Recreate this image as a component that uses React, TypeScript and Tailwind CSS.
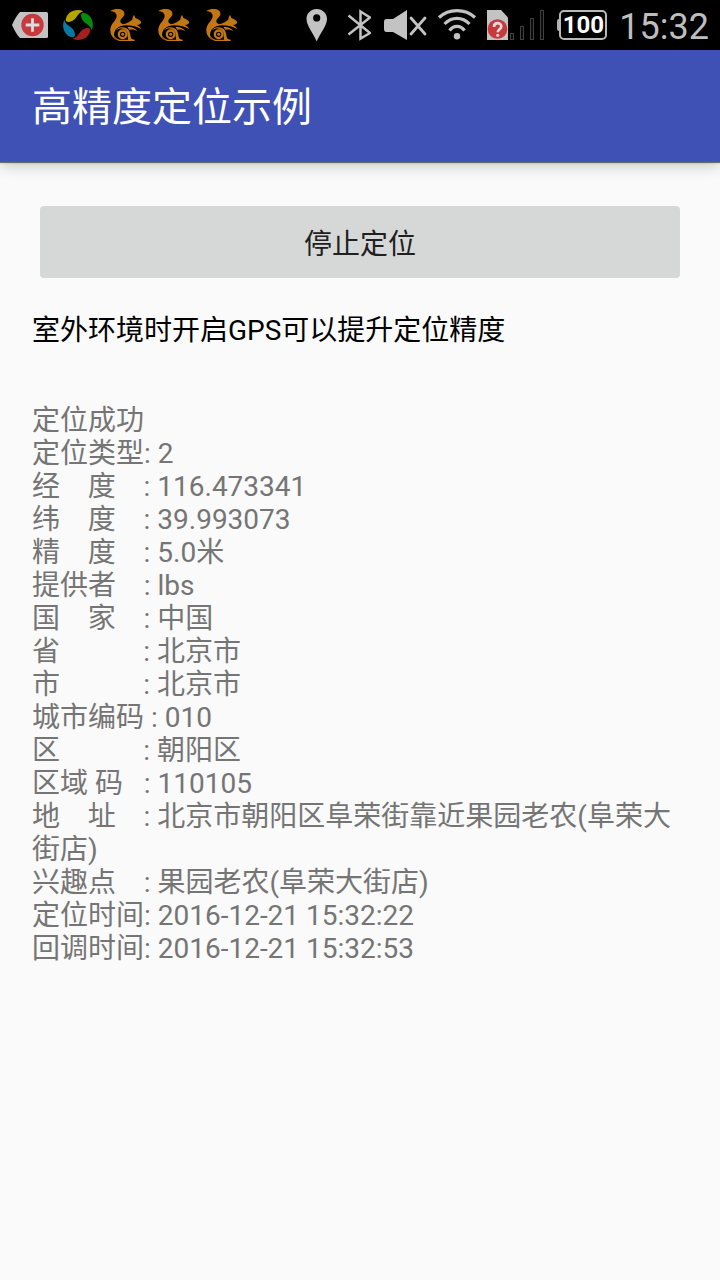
const report = [
  "定位成功",
  "定位类型: 2",
  "经    度    : 116.473341",
  "纬    度    : 39.993073",
  "精    度    : 5.0米",
  "提供者    : lbs",
  "国    家    : 中国",
  "省            : 北京市",
  "市            : 北京市",
  "城市编码 : 010",
  "区            : 朝阳区",
  "区域 码   : 110105",
  "地    址    : 北京市朝阳区阜荣街靠近果园老农(阜荣大街店)",
  "兴趣点    : 果园老农(阜荣大街店)",
  "定位时间: 2016-12-21 15:32:22",
  "回调时间: 2016-12-21 15:32:53",
];

function TagIcon() {
  return (
    <svg className="h-[50px] w-12 shrink-0" viewBox="0 0 48 50" aria-hidden="true">
      <path d="M14 12H40.500Q42 12 42 13.500V36.500Q42 38 40.500 38H14Q10 34 6 25Q10 16 14 12Z" fill="#c3c3c3" />
      <circle cx="26.500" cy="25" r="11.200" fill="#c8393d" />
      <path d="M26.500 18.200V31.800M19.700 25H33.300" stroke="#dedede" strokeWidth="2.800" />
    </svg>
  );
}

const petals = [
  { angle: 0, color: "#b5a400" },
  { angle: 90, color: "#058b0d" },
  { angle: 180, color: "#a51f20" },
  { angle: 270, color: "#0878a5" },
];

function PinwheelIcon() {
  return (
    <svg className="h-[50px] w-12 shrink-0" viewBox="0 0 144 150" aria-hidden="true">
      {petals.map((petal) => (
        <path
          key={petal.angle}
          transform={`rotate(${petal.angle} 72 75)`}
          d="M88 34C68 24 38 34 35 60C36 68 48 67 58 61C70 53 70 39 88 34Z"
          fill={petal.color}
        />
      ))}
    </svg>
  );
}

function SquirrelIcon() {
  return (
    <svg className="h-[50px] w-12 shrink-0" viewBox="0 0 144 150" aria-hidden="true">
      <g fill="#c27712">
        <path d="M25 33C34 27 46 26 54 28C63 30 69 36 67 44C65 51 55 56 55 64C55 70 61 73 67 72C76 70 84 63 91 59L92 52L96 44L100 54C107 56 114 60 118 67C116 73 111 74 105 75C112 79 116 83 118 88C106 80 89 76 72 76C50 77 37 88 36 104C36 110 39 115 43 120C30 113 24 101 25 88C26 70 45 60 44 47C43 38 35 34 25 33Z" />
        <path d="M41 91C50 79 69 80 78 88C85 95 85 107 87 115Q88 118 97 119Q99 120 98 123H53C44 122 36 114 37 106C39 113 45 118 53 119H79C76 115 79 99 74 94C66 83 53 84 41 91Z" />
        <path d="M76 81C90 80 101 85 107 94C97 88 88 88 83 90Z" />
      </g>
      <circle cx="62" cy="103" r="11.500" fill="none" stroke="#c27712" strokeWidth="7" />
      <circle cx="62" cy="103" r="4.500" fill="#c27712" />
    </svg>
  );
}

function PinIcon() {
  return (
    <svg className="h-[50px] w-[30px] shrink-0" viewBox="0 0 30 50" aria-hidden="true">
      <path fillRule="evenodd" d="M11.700 9C5.800 9 1.500 13.400 1.500 19C1.500 25.500 8 33 11.700 41.500C15.400 33 22 25.500 22 19C22 13.400 17.600 9 11.700 9ZM11.700 14.300A3.600 3.600 0 1 1 11.700 21.500A3.600 3.600 0 1 1 11.700 14.300Z" fill="#c3c3c3" />
    </svg>
  );
}

function BluetoothIcon() {
  return (
    <svg className="h-[50px] w-6 shrink-0" viewBox="0 0 24 50" aria-hidden="true">
      <path d="M1.500 15.500L23 33L13.500 38.500V11.500L23 17.500L1.500 34.500" fill="none" stroke="#c3c3c3" strokeWidth="2.500" />
    </svg>
  );
}

function MutedIcon() {
  return (
    <svg className="h-[50px] w-11 shrink-0" viewBox="0 0 44 50" aria-hidden="true">
      <path d="M3.500 19H10L24 10V40L10 32H3.500Q1 32 1 29V22Q1 19 3.500 19Z" fill="#c3c3c3" />
      <path d="M28 18L42 34M42 18L28 34" stroke="#c3c3c3" strokeWidth="2.800" strokeLinecap="round" />
    </svg>
  );
}

function WifiIcon() {
  return (
    <svg className="h-[50px] w-9 shrink-0 overflow-visible" viewBox="0 0 36 50" aria-hidden="true">
      <g fill="none" stroke="#c3c3c3" strokeWidth="3.200">
        <path d="M0 17.500C10 8.300 26 8.300 36 17.500" />
        <path d="M5.500 24C12.500 16.500 23.500 16.500 30.500 24" />
        <path d="M10.500 30.500C14.500 25 21.500 25 25.500 30.500" />
      </g>
      <circle cx="18" cy="36.200" r="3.200" fill="#c3c3c3" />
    </svg>
  );
}

function SignalIcon() {
  return (
    <svg className="h-[50px] w-[58px] shrink-0" viewBox="0 0 58 50" aria-hidden="true">
      <path d="M0 10H14L21 17.500V40H0Z" fill="#c3c3c3" />
      <circle cx="10.500" cy="29" r="9.800" fill="#c8393d" />
      <path d="M7 27C7 21.800 14.300 22 14.300 26.500C14.300 29.200 10.700 29.300 10.700 32.200" fill="none" stroke="#dedede" strokeWidth="2.600" />
      <circle cx="10.700" cy="35.200" r="1.500" fill="#dedede" />
      <g fill="#0b0b0b" stroke="#404040">
        <rect x="23.500" y="33.500" width="3" height="6" />
        <rect x="33.500" y="26.500" width="3" height="13" />
        <rect x="43.500" y="18.500" width="3" height="21" />
        <rect x="53.500" y="10.500" width="3" height="29" />
      </g>
    </svg>
  );
}

function Battery() {
  return (
    <div className="flex shrink-0 items-center" role="img" aria-label="100">
      <span className="h-3 w-0.5 rounded-l-sm bg-[#b0b0b0]" />
      <span className="flex h-[30px] w-12 items-center justify-center rounded-[5px] border-2 border-[#b8b8b8] font-['Roboto'] text-2xl leading-6 font-bold text-white">
        100
      </span>
    </div>
  );
}

export default function App() {
  return (
    <div className="min-h-screen bg-[#fafafa] font-['Roboto','Noto_Sans_CJK_SC',sans-serif] text-[28px] leading-[33px]">
      <div className="flex h-[50px] items-center justify-between bg-black pr-[11px] pl-1.5">
        <div className="flex items-center">
          <TagIcon />
          <PinwheelIcon />
          <SquirrelIcon />
          <SquirrelIcon />
          <SquirrelIcon />
        </div>
        <div className="flex items-center gap-3">
          <PinIcon />
          <BluetoothIcon />
          <MutedIcon />
          <WifiIcon />
          <SignalIcon />
          <Battery />
          <time className="pt-1 text-4xl leading-10 text-[#bebebe]">15:32</time>
        </div>
      </div>
      <header className="flex h-28 items-center bg-[#3f51b5] px-8 pt-1 shadow-[0_1px_1px_rgba(0,0,0,0.5),0_4px_14px_rgba(0,0,0,0.2)]">
        <h1 className="text-[40px] leading-[48px] font-normal text-white">高精度定位示例</h1>
      </header>
      <main className="px-8 pt-11">
        <div className="px-2">
          <button type="button" className="h-18 w-full rounded-sm bg-[#d6d8d7] pt-1 text-[#202020]">
            停止定位
          </button>
        </div>
        <p className="mt-9 text-black">室外环境时开启GPS可以提升定位精度</p>
        <div className="mt-[57px] text-[#757575]">
          {report.map((line) => (
            <p key={line} className="break-words whitespace-pre-wrap">
              {line}
            </p>
          ))}
        </div>
      </main>
    </div>
  );
}
